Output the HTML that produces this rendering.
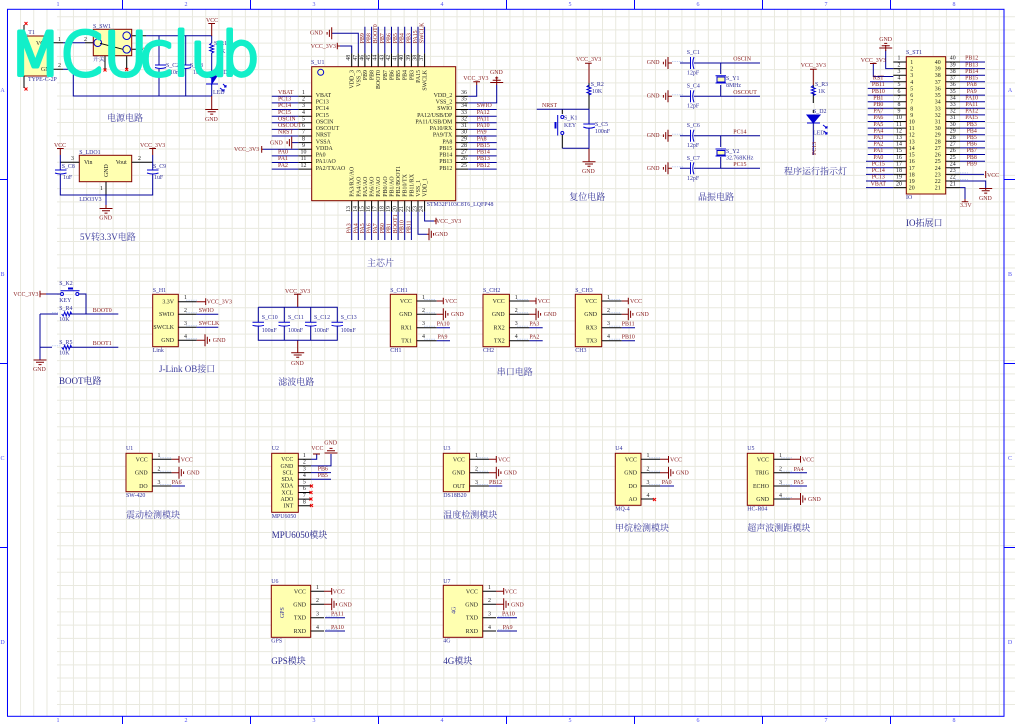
<!DOCTYPE html>
<html><head><meta charset="utf-8"><style>
html,body{margin:0;padding:0;background:#fff;width:1015px;height:724px;overflow:hidden}
svg{display:block;filter:blur(.3px)}
.w{stroke:#00009a;fill:none;stroke-width:1}
.p{stroke:#000;fill:none;stroke-width:1}
.m{stroke:#800000;fill:none;stroke-width:1}
.c{stroke:#0000d0;fill:none;stroke-width:1}
.bx{stroke:#800000;fill:#ffffb0;stroke-width:1}
.x{stroke:#f00000;fill:none;stroke-width:1}
text{font-family:"Liberation Serif","Noto Serif CJK SC",serif;font-size:5.9px}
.nl text{fill:#8a2020}
.dl text{fill:#30309a}
.pn text{fill:#222}
.nm text{fill:#222}
.tt text{fill:#3c3c9c;font-size:9px;font-family:"Liberation Serif","Noto Serif CJK SC",serif}
.fr text{fill:#5050f0;font-size:6px}
.e text{text-anchor:end}
.mid text{text-anchor:middle}
</style></head><body>
<svg width="1015" height="724" viewBox="0 0 1015 724" xmlns="http://www.w3.org/2000/svg">
<defs>
<g id="gr" class="m"><path d="M0-6V6M2.3-3.6V3.6M4.6-1.3V1.3"/></g>
<g id="gl" class="m"><path d="M0-6V6M-2.3-3.6V3.6M-4.6-1.3V1.3"/></g>
<g id="gd" class="m"><path d="M-6.5 0H6.5M-4 2.3H4M-1.5 4.6H1.5"/></g>
<g id="gu" class="m"><path d="M-6.5 0H6.5M-4-2.3H4M-1.5-4.6H1.5"/></g>
<g id="res" class="c"><path d="M0-5L-2-3.5 2-2-2-.5 2 1-2 2.5 2 4 0 5"/></g>
<g id="rh" class="c"><path d="M-5 0L-3.5 2-2-2-.5 2 1-2 2.5 2 4-2 5 0"/></g>
<g id="xm" class="x"><path d="M-1.5-1.5L1.5 1.5M-1.5 1.5L1.5-1.5"/></g>
</defs>
<rect width="1015" height="724" fill="#fff"/>
<!-- grid -->
<line x1="6.8" y1="362.5" x2="1004" y2="362.5" stroke="#e9e9df" stroke-width="707" stroke-dasharray="1 12.227"/>
<line x1="555.5" y1="16.2" x2="555.5" y2="716" stroke="#e9e9df" stroke-width="997" stroke-dasharray="1 12.227"/>
<!-- frame -->
<rect x="7.5" y="9.3" width="996.5" height="707" fill="none" stroke="#0000ff"/>
<path stroke="#0000ff" fill="none" d="M122.5 0V9M250.5 0V9M378.5 0V9M506.5 0V9M634.5 0V9M762.5 0V9M890.5 0V9M122.5 716V724M250.5 716V724M378.5 716V724M506.5 716V724M634.5 716V724M762.5 716V724M890.5 716V724M0 179.5H7.5M0 363.5H7.5M0 547.5H7.5M1004 179.5H1015M1004 363.5H1015M1004 547.5H1015"/>
<g class="fr mid">
<text x="58" y="6">1</text><text x="186" y="6">2</text><text x="314" y="6">3</text><text x="442" y="6">4</text><text x="570" y="6">5</text><text x="698" y="6">6</text><text x="826" y="6">7</text><text x="954" y="6">8</text>
<text x="58" y="722">1</text><text x="186" y="722">2</text><text x="314" y="722">3</text><text x="442" y="722">4</text><text x="570" y="722">5</text><text x="698" y="722">6</text><text x="826" y="722">7</text><text x="954" y="722">8</text>
<text x="2.5" y="92">A</text><text x="2.5" y="276">B</text><text x="2.5" y="460">C</text><text x="2.5" y="644">D</text>
<text x="1010" y="92">A</text><text x="1010" y="276">B</text><text x="1010" y="460">C</text><text x="1010" y="644">D</text>
</g>

<!-- pale artefacts next to pin/wire joins -->
<path stroke="#c4d2f4" fill="none" stroke-dasharray="1.4 1" d="M160 457.8H171M160 471.2H171M160 484.5H171M477 457.8H488M477 471.2H488M477 484.5H488M649 457.8H660M649 471.2H660M649 484.5H660M781 457.8H792M781 471.2H792M781 484.5H792M781 497.5H792M326 616.2H337M326 629.5H337M498 616.2H509M498 629.5H509M424 299.5H436M424 312.8H436M424 326.2H436M424 339.2H436M517 299.5H529M517 312.8H529M517 326.2H529M517 339.2H529M609 299.5H621M609 312.8H621M609 326.2H621M609 339.2H621M186 300.2H197M186 312.8H197M186 325.8H197M186 338.8H197M52 312.5H58M52 345.8H60M672 61.5H684M672 94.8H684M672 134.2H684M672 166.8H684M955 172.9H968M955 179.5H968"/>

<!-- POWER -->
<rect class="bx" x="20" y="36" width="32.7" height="40"/>
<path class="p" d="M24 36V25M24 76V88M52.7 42.7H63M52.7 69.3H63M85 42.7H93.3M131.7 35.7H146M131.7 49.3H143M105 55.7V70M126.7 55.7V70"/>
<use href="#xm" x="26" y="23.5"/><use href="#xm" x="26" y="89"/><use href="#xm" x="145" y="49.3"/><use href="#xm" x="105" y="70"/><use href="#xm" x="126.7" y="69.5"/>
<rect class="bx" x="93.3" y="29.3" width="38.4" height="26.4"/>
<g class="c"><circle cx="126.7" cy="35.7" r="3.8"/><circle cx="126.7" cy="49.3" r="3.8"/><circle cx="97.7" cy="42.7" r="3.8"/></g>
<path class="p" d="M100 43.3L123 49.3"/>
<path class="w" d="M63 42.7H85M63 69.3H73.3V96H211.7M146 35.7H211.7M159 35.7V65M159 69V96M185.7 35.7V65M185.7 69V96M211.7 35.7V43M211.7 53V76M211.7 84V96"/>
<path class="c" d="M155 65H166M155 67.5Q160.5 69.5 166 67.5M181 65H191M181 67.5Q186 69.5 191 67.5M206 84H218"/>
<path d="M211.7 78L206.5 76H217L211.7 84Z" fill="#0000d0" stroke="#0000d0"/>
<path class="c" d="M223 84L226 87M220 88L224 91M226 85V87H224M224 89V91H222"/>
<use href="#res" x="211.7" y="48"/>
<path class="m" d="M208.3 23.5H215M211.7 23.5V36M211.7 96V109.3"/><use href="#gd" x="211.7" y="109.5"/>
<g class="nl"><text x="206" y="22">VCC</text><text x="205" y="121">GND</text></g>
<g class="dl"><text x="22" y="34">S_T1</text><text x="28" y="81">TYPE-C-2P</text><text x="93" y="28">S_SW1</text><text x="93" y="61">开关</text><text x="166" y="67">S_C2</text><text x="170" y="74">10nF</text><text x="190" y="67">S_C3</text><text x="193" y="74">1uF</text><text x="214" y="45">S_R1</text><text x="218" y="53">1K</text><text x="217" y="74">S_D1</text><text x="213" y="94">LED</text></g>
<g class="pn"><text x="36" y="45">VCC</text><text x="41" y="71">GND</text></g>
<g class="nm"><text x="58" y="41">1</text><text x="58" y="67">2</text><text x="84" y="41">2</text><text x="138" y="34">1</text><text x="139" y="47">3</text></g>
<g class="tt"><text x="107" y="121">电源电路</text></g>

<!-- MCU -->
<rect class="bx" x="311.7" y="66.7" width="144" height="134"/>
<circle cx="320.7" cy="72.3" r="3" fill="none" stroke="#0000d0"/>
<path class="p" d="M298.3 96.3H311.7M298.3 102.9H311.7M298.3 109.5H311.7M298.3 116.2H311.7M298.3 122.8H311.7M298.3 129.4H311.7M298.3 136H311.7M298.3 142.6H311.7M298.3 149.3H311.7M298.3 155.9H311.7M298.3 162.5H311.7M298.3 169.1H311.7M455.7 96.3H468.3M455.7 102.9H468.3M455.7 109.5H468.3M455.7 116.2H468.3M455.7 122.8H468.3M455.7 129.4H468.3M455.7 136H468.3M455.7 142.6H468.3M455.7 149.3H468.3M455.7 155.9H468.3M455.7 162.5H468.3M455.7 169.1H468.3
M351.7 66.7V53.3M358.3 66.7V53.3M364.9 66.7V53.3M371.6 66.7V53.3M378.2 66.7V53.3M384.8 66.7V53.3M391.5 66.7V53.3M398.1 66.7V53.3M404.7 66.7V53.3M411.4 66.7V53.3M418 66.7V53.3M424.6 66.7V53.3
M351.7 200.7V211.7M358.3 200.7V211.7M364.9 200.7V211.7M371.6 200.7V211.7M378.2 200.7V211.7M384.8 200.7V211.7M391.5 200.7V211.7M398.1 200.7V211.7M404.7 200.7V211.7M411.4 200.7V211.7M418 200.7V211.7M424.6 200.7V211.7"/>
<path class="w" d="M271.7 96.3H298.3M271.7 102.9H298.3M271.7 109.5H298.3M271.7 116.2H298.3M271.7 122.8H298.3M271.7 129.4H298.3M271.7 136H298.3M291.7 142.6H298.3M263 149.3H298.3M271.7 155.9H298.3M271.7 162.5H298.3M271.7 169.1H298.3
M468.3 109.5H496.7M468.3 116.2H496.7M468.3 122.8H496.7M468.3 129.4H496.7M468.3 136H496.7M468.3 142.6H496.7M468.3 149.3H496.7M468.3 155.9H496.7M468.3 162.5H496.7M468.3 169.1H496.7M468.3 96.3H476.7V85M468.3 102.9H496.7V85
M351.7 53.3V46H340M358.3 53.3V33.3H332M364.9 53.3V26.7M371.6 53.3V26.7M378.2 53.3V26.7M384.8 53.3V26.7M391.5 53.3V26.7M398.1 53.3V26.7M404.7 53.3V26.7M411.4 53.3V26.7M418 53.3V26.7M424.6 53.3V26.7
M351.7 211.7V240M358.3 211.7V240M364.9 211.7V240M371.6 211.7V240M378.2 211.7V240M384.8 211.7V240M391.5 211.7V240M398.1 211.7V240M404.7 211.7V240M411.4 211.7V240M418 211.7V234.3H427M424.6 211.7V221H434"/>
<path class="m" d="M337.3 42.7V49.3M340 46H337.3M436 217.7V224.3M434 221H436M261.7 146V152.7M261.7 149.3H263M473.3 81.7H480M476.7 81.7V85M496.7 85V76.5M427 234.3H429"/>
<use href="#gl" x="331.7" y="33.3"/><use href="#gl" x="291.7" y="142.6"/><use href="#gu" x="496.7" y="82.5"/><use href="#gr" x="429" y="234.3"/>
<g class="nl">
<text x="310" y="34.5">GND</text><text x="310.7" y="48">VCC_3V3</text><text x="463.3" y="80">VCC_3V3</text><text x="490" y="74">GND</text><text x="436" y="223">VCC_3V3</text><text x="435" y="236">GND</text>
<text x="278" y="94">VBAT</text><text x="278" y="100.6">PC13</text><text x="278" y="107.2">PC14</text><text x="278" y="113.9">PC15</text><text x="278" y="120.5">OSCIN</text><text x="278" y="127.1">OSCOUT</text><text x="278" y="133.7">NRST</text><text x="270" y="144.5">GND</text><text x="234" y="151">VCC_3V3</text><text x="278" y="153.6">PA0</text><text x="278" y="160.2">PA1</text><text x="278" y="166.8">PA2</text>
<text x="476.7" y="107.2">SWIO</text><text x="476.7" y="113.9">PA12</text><text x="476.7" y="120.5">PA11</text><text x="476.7" y="127.1">PA10</text><text x="476.7" y="133.7">PA9</text><text x="476.7" y="140.3">PA8</text><text x="476.7" y="147">PB15</text><text x="476.7" y="153.6">PB14</text><text x="476.7" y="160.2">PB13</text><text x="476.7" y="166.8">PB12</text>
</g>
<g class="nm" text-anchor="middle">
<text x="303.5" y="94">1</text><text x="303.5" y="100.6">2</text><text x="303.5" y="107.2">3</text><text x="303.5" y="113.9">4</text><text x="303.5" y="120.5">5</text><text x="303.5" y="127.1">6</text><text x="303.5" y="133.7">7</text><text x="303.5" y="140.3">8</text><text x="303.5" y="147">9</text><text x="303.5" y="153.6">10</text><text x="303.5" y="160.2">11</text><text x="303.5" y="166.8">12</text>
<text x="464" y="94">36</text><text x="464" y="100.6">35</text><text x="464" y="107.2">34</text><text x="464" y="113.9">33</text><text x="464" y="120.5">32</text><text x="464" y="127.1">31</text><text x="464" y="133.7">30</text><text x="464" y="140.3">29</text><text x="464" y="147">28</text><text x="464" y="153.6">27</text><text x="464" y="160.2">26</text><text x="464" y="166.8">25</text>
</g>
<g class="pn">
<text x="315.7" y="97">VBAT</text><text x="315.7" y="103.6">PC13</text><text x="315.7" y="110.2">PC14</text><text x="315.7" y="116.9">PC15</text><text x="315.7" y="123.5">OSCIN</text><text x="315.7" y="130.1">OSCOUT</text><text x="315.7" y="136.7">NRST</text><text x="315.7" y="143.3">VSSA</text><text x="315.7" y="150">VDDA</text><text x="315.7" y="156.6">PA0</text><text x="315.7" y="163.2">PA1/AO</text><text x="315.7" y="169.8">PA2/TX/AO</text>
</g>
<g class="pn e">
<text x="452.3" y="97">VDD_2</text><text x="452.3" y="103.6">VSS_2</text><text x="452.3" y="110.2">SWIO</text><text x="452.3" y="116.9">PA12/USB/DP</text><text x="452.3" y="123.5">PA11/USB/DM</text><text x="452.3" y="130.1">PA10/RX</text><text x="452.3" y="136.7">PA9/TX</text><text x="452.3" y="143.3">PA8</text><text x="452.3" y="150">PB15</text><text x="452.3" y="156.6">PB14</text><text x="452.3" y="163.2">PB13</text><text x="452.3" y="169.8">PB12</text>
</g>
<g transform="rotate(-90)">
<g class="nl">
<text x="-43.3" y="363.9">PB9</text><text x="-43.3" y="370.6">PB8</text><text x="-43.3" y="377.2">BOOT0</text><text x="-43.3" y="383.8">PB7</text><text x="-43.3" y="390.5">PB6</text><text x="-43.3" y="397.1">PB5</text><text x="-43.3" y="403.7">PB4</text><text x="-43.3" y="410.4">PB3</text><text x="-43.3" y="417">PA15</text><text x="-43.3" y="423.6">SWCLK</text>
<text x="-233.3" y="350.7">PA3</text><text x="-233.3" y="357.3">PA4</text><text x="-233.3" y="363.9">PA5</text><text x="-233.3" y="370.6">PA6</text><text x="-233.3" y="377.2">PA7</text><text x="-233.3" y="383.8">PB0</text><text x="-233.3" y="390.5">PB1</text><text x="-233.3" y="397.1">BOOT1</text><text x="-233.3" y="403.7">PB10</text><text x="-233.3" y="410.4">PB11</text>
</g>
<g class="nm mid">
<text x="-57.7" y="350.2">48</text><text x="-57.7" y="356.8">47</text><text x="-57.7" y="363.4">46</text><text x="-57.7" y="370.1">45</text><text x="-57.7" y="376.7">44</text><text x="-57.7" y="383.3">43</text><text x="-57.7" y="390">42</text><text x="-57.7" y="396.6">41</text><text x="-57.7" y="403.2">40</text><text x="-57.7" y="409.9">39</text><text x="-57.7" y="416.5">38</text><text x="-57.7" y="423.1">37</text>
<text x="-209" y="350.2">13</text><text x="-209" y="356.8">14</text><text x="-209" y="363.4">15</text><text x="-209" y="370.1">16</text><text x="-209" y="376.7">17</text><text x="-209" y="383.3">18</text><text x="-209" y="390">19</text><text x="-209" y="396.6">20</text><text x="-209" y="403.2">21</text><text x="-209" y="409.9">22</text><text x="-209" y="416.5">23</text><text x="-209" y="423.1">24</text>
</g>
<g class="pn e">
<text x="-70" y="353.7">VDD_3</text><text x="-70" y="360.3">VSS_3</text><text x="-70" y="366.9">PB9</text><text x="-70" y="373.6">PB8</text><text x="-70" y="380.2">BOOT0</text><text x="-70" y="386.8">PB7</text><text x="-70" y="393.5">PB6</text><text x="-70" y="400.1">PB5</text><text x="-70" y="406.7">PB4</text><text x="-70" y="413.4">PB3</text><text x="-70" y="420">PA15</text><text x="-70" y="426.6">SWCLK</text>
</g>
<g class="pn">
<text x="-196.7" y="353.7">PA3/RX/AO</text><text x="-196.7" y="360.3">PA4/AO</text><text x="-196.7" y="366.9">PA5/AO</text><text x="-196.7" y="373.6">PA6/AO</text><text x="-196.7" y="380.2">PA7/AO</text><text x="-196.7" y="386.8">PB0/AO</text><text x="-196.7" y="393.5">PB1/AO</text><text x="-196.7" y="400.1">PB2/BOOT1</text><text x="-196.7" y="406.7">PB10/TX</text><text x="-196.7" y="413.4">PB11/RX</text><text x="-196.7" y="420">VSS_1</text><text x="-196.7" y="426.6">VDD_1</text>
</g>
</g>
<g class="dl"><text x="311" y="64">S_U1</text><text x="426.7" y="206">STM32F103C8T6_LQFP48</text></g>
<g class="tt"><text x="367" y="266">主芯片</text></g>

<!-- RESET -->
<path class="m" d="M585 63.3H591.7M589 63.3V83M589 148.3V161.7"/><use href="#gd" x="589" y="161.7"/>
<path class="p" d="M589 83V87M589 93V109.3M562.3 109.3V114M562.3 135V148.3"/>
<path class="w" d="M536.7 109.3H589V124M589 127.5V148.3H562.3"/>
<use href="#res" x="589" y="90"/>
<path class="c" d="M583.3 124H595M583.3 127Q589 129.5 595 127M557.7 115V135.5"/>
<path d="M555.5 122V128.5" stroke="#0000d0" stroke-width="2" fill="none"/>
<circle cx="562.3" cy="117" r="1.5" fill="#fff" stroke="#0000d0"/><circle cx="562.3" cy="133" r="1.5" fill="#fff" stroke="#0000d0"/>
<g class="nl"><text x="576" y="61">VCC_3V3</text><text x="582" y="173">GND</text><text x="542" y="107">NRST</text></g>
<g class="dl"><text x="590.7" y="86">S_R2</text><text x="592" y="93">10K</text><text x="595" y="126">S_C5</text><text x="595" y="133">100nF</text><text x="564" y="119.5">S_K1</text><text x="564" y="127">KEY</text></g>
<g class="tt"><text x="569.3" y="200">复位电路</text></g>

<!-- CRYSTAL -->
<use href="#gl" x="668" y="63"/><use href="#gl" x="668" y="96.3"/><use href="#gl" x="668" y="135.7"/><use href="#gl" x="668" y="168.3"/>
<path class="m" d="M668 63H672M668 96.3H672M668 135.7H672M668 168.3H672"/>
<path class="w" d="M680 63H690.5M694 63H760M680 96.3H690.5M694 96.3H760M680 135.7H690.5M694 135.7H760M680 168.3H690.5M694 168.3H760M720.7 63V74M720.7 85V96.3M720.7 135.7V147M720.7 157V168.3"/>
<path class="c" d="M690.5 57V69M694 57Q691.5 63 694 69M690.5 90.3V102.3M694 90.3Q691.5 96.3 694 102.3M690.5 129.7V141.7M694 129.7Q691.5 135.7 694 141.7M690.5 162.3V174.3M694 162.3Q691.5 168.3 694 174.3M715.5 75.7H726M715.5 83H726M715.5 149H726M715.5 156H726"/>
<rect x="717" y="77" width="8" height="5" fill="#ffffb0" stroke="#0000d0"/><rect x="717" y="150.5" width="8" height="4.5" fill="#ffffb0" stroke="#0000d0"/>
<g class="nl"><text x="646.7" y="64">GND</text><text x="646.7" y="97.5">GND</text><text x="646.7" y="137">GND</text><text x="646.7" y="170">GND</text><text x="733.3" y="60.5">OSCIN</text><text x="733.3" y="94">OSCOUT</text><text x="733.3" y="133.5">PC14</text><text x="733.3" y="166">PC15</text></g>
<g class="dl"><text x="686.7" y="54">S_C1</text><text x="687" y="74.5">12pF</text><text x="686.7" y="87.5">S_C4</text><text x="687" y="107.5">12pF</text><text x="686.7" y="127">S_C6</text><text x="687" y="147">12pF</text><text x="686.7" y="160">S_C7</text><text x="687" y="180">12pF</text><text x="726" y="80">S_Y1</text><text x="726" y="87">8MHz</text><text x="726" y="153">S_Y2</text><text x="726" y="159.5">32.768KHz</text></g>
<g class="tt"><text x="698" y="200">晶振电路</text></g>

<!-- LED -->
<path class="m" d="M810 69.3H816.7M813.3 69.3V85"/>
<path class="p" d="M813.3 85V88M813.3 93V103M813.3 110V113"/>
<use href="#res" x="813.3" y="90.5"/>
<path d="M813.3 123L807 115H820Z" fill="#0000d0" stroke="#0000d0"/>
<path class="c" d="M807 123H820M823 125L827 128M824 131L827 134M827 126V128H825M827 132V134H825"/>
<path class="w" d="M813.3 123V155"/>
<g class="nl"><text x="800.7" y="67">VCC_3V3</text><text x="816" y="155" transform="rotate(-90 816 155)">PC13</text></g>
<g class="dl"><text x="815" y="86">S_R3</text><text x="818" y="93">1K</text><text x="813" y="113">S_D2</text><text x="813" y="134.5">LED</text></g>
<g class="tt"><text x="784" y="174.5">程序运行指示灯</text></g>

<!-- IO -->
<rect class="bx" x="906.3" y="56.7" width="39.4" height="137.3"/>
<path class="p" d="M893.3 62H906.3M893.3 68.6H906.3M893.3 75.2H906.3M893.3 81.8H906.3M893.3 88.4H906.3M893.3 95.1H906.3M893.3 101.7H906.3M893.3 108.3H906.3M893.3 114.9H906.3M893.3 121.5H906.3M893.3 128.1H906.3M893.3 134.7H906.3M893.3 141.3H906.3M893.3 147.9H906.3M893.3 154.5H906.3M893.3 161.2H906.3M893.3 167.8H906.3M893.3 174.4H906.3M893.3 181H906.3M893.3 187.6H906.3
M945.7 62H960M945.7 68.6H960M945.7 75.2H960M945.7 81.8H960M945.7 88.4H960M945.7 95.1H960M945.7 101.7H960M945.7 108.3H960M945.7 114.9H960M945.7 121.5H960M945.7 128.1H960M945.7 134.7H960M945.7 141.3H960M945.7 147.9H960M945.7 154.5H960M945.7 161.2H960M945.7 167.8H960M945.7 174.4H960M945.7 181H960M945.7 187.6H960"/>
<path class="w" d="M885.7 50V68.6H893.3M873.3 63.5V76.5H893.3M870 81.8H893.3M867.7 88.4H893.3M867.7 95.1H893.3M867.7 101.7H893.3M867.7 108.3H893.3M867.7 114.9H893.3M867.7 121.5H893.3M867.7 128.1H893.3M867.7 134.7H893.3M867.7 141.3H893.3M867.7 147.9H893.3M867.7 154.5H893.3M866 161.2H893.3M866 167.8H893.3M866 174.4H893.3M866 181H893.3M866 187.6H893.3
M960 62H985M960 68.6H985M960 75.2H985M960 81.8H985M960 88.4H985M960 95.1H985M960 101.7H985M960 108.3H985M960 114.9H985M960 121.5H985M960 128.1H985M960 134.7H985M960 141.3H985M960 147.9H985M960 154.5H985M960 161.2H985M960 174.4H984M960 181H985.7V188M960 187.6H965V200"/>
<path class="m" d="M885.7 51V45M870 63.5H876.6M985.7 171V178M985.7 188V190M961.7 201.7H968.3M965 199V201.7"/><use href="#gu" x="885.7" y="48"/><use href="#gd" x="985.7" y="188.5"/>
<g class="nl">
<text x="879.3" y="41">GND</text><text x="860.7" y="62">VCC_3V3</text><text x="987" y="177">VCC</text><text x="979" y="200">GND</text><text x="960" y="207">3.3V</text>
</g>
<g class="nl mid">
<text x="878.3" y="79.5">RST</text><text x="878.3" y="86.1">PB11</text><text x="878.3" y="92.8">PB10</text><text x="878.3" y="99.4">PB1</text><text x="878.3" y="106">PB0</text><text x="878.3" y="112.6">PA7</text><text x="878.3" y="119.2">PA6</text><text x="878.3" y="125.8">PA5</text><text x="878.3" y="132.4">PA4</text><text x="878.3" y="139">PA3</text><text x="878.3" y="145.6">PA2</text><text x="878.3" y="152.2">PA1</text><text x="878.3" y="158.9">PA0</text><text x="878.3" y="165.5">PC15</text><text x="878.3" y="172.1">PC14</text><text x="878.3" y="178.7">PC13</text><text x="878.3" y="185.3">VBAT</text>
<text x="971.7" y="59.7">PB12</text><text x="971.7" y="66.3">PB13</text><text x="971.7" y="72.9">PB14</text><text x="971.7" y="79.5">PB15</text><text x="971.7" y="86.1">PA8</text><text x="971.7" y="92.8">PA9</text><text x="971.7" y="99.4">PA10</text><text x="971.7" y="106">PA11</text><text x="971.7" y="112.6">PA12</text><text x="971.7" y="119.2">PA15</text><text x="971.7" y="125.8">PB3</text><text x="971.7" y="132.4">PB4</text><text x="971.7" y="139">PB5</text><text x="971.7" y="145.6">PB6</text><text x="971.7" y="152.2">PB7</text><text x="971.7" y="158.9">PB8</text><text x="971.7" y="165.5">PB9</text>
</g>
<g class="nm mid">
<text x="899" y="59.7">1</text><text x="899" y="66.3">2</text><text x="899" y="72.9">3</text><text x="899" y="79.5">4</text><text x="899" y="86.1">5</text><text x="899" y="92.8">6</text><text x="899" y="99.4">7</text><text x="899" y="106">8</text><text x="899" y="112.6">9</text><text x="899" y="119.2">10</text><text x="899" y="125.8">11</text><text x="899" y="132.4">12</text><text x="899" y="139">13</text><text x="899" y="145.6">14</text><text x="899" y="152.2">15</text><text x="899" y="158.9">16</text><text x="899" y="165.5">17</text><text x="899" y="172.1">18</text><text x="899" y="178.7">19</text><text x="899" y="185.3">20</text>
<text x="952.7" y="59.7">40</text><text x="952.7" y="66.3">39</text><text x="952.7" y="72.9">38</text><text x="952.7" y="79.5">37</text><text x="952.7" y="86.1">36</text><text x="952.7" y="92.8">35</text><text x="952.7" y="99.4">34</text><text x="952.7" y="106">33</text><text x="952.7" y="112.6">32</text><text x="952.7" y="119.2">31</text><text x="952.7" y="125.8">30</text><text x="952.7" y="132.4">29</text><text x="952.7" y="139">28</text><text x="952.7" y="145.6">27</text><text x="952.7" y="152.2">26</text><text x="952.7" y="158.9">25</text><text x="952.7" y="165.5">24</text><text x="952.7" y="172.1">23</text><text x="952.7" y="178.7">22</text><text x="952.7" y="185.3">21</text>
</g>
<g class="pn mid">
<text x="911.7" y="64">1</text><text x="911.7" y="70.6">2</text><text x="911.7" y="77.2">3</text><text x="911.7" y="83.8">4</text><text x="911.7" y="90.4">5</text><text x="911.7" y="97.1">6</text><text x="911.7" y="103.7">7</text><text x="911.7" y="110.3">8</text><text x="911.7" y="116.9">9</text><text x="911.7" y="123.5">10</text><text x="911.7" y="130.1">11</text><text x="911.7" y="136.7">12</text><text x="911.7" y="143.3">13</text><text x="911.7" y="149.9">14</text><text x="911.7" y="156.5">15</text><text x="911.7" y="163.2">16</text><text x="911.7" y="169.8">17</text><text x="911.7" y="176.4">18</text><text x="911.7" y="183">19</text><text x="911.7" y="189.6">20</text>
<text x="937.7" y="64">40</text><text x="937.7" y="70.6">39</text><text x="937.7" y="77.2">38</text><text x="937.7" y="83.8">37</text><text x="937.7" y="90.4">36</text><text x="937.7" y="97.1">35</text><text x="937.7" y="103.7">34</text><text x="937.7" y="110.3">33</text><text x="937.7" y="116.9">32</text><text x="937.7" y="123.5">31</text><text x="937.7" y="130.1">30</text><text x="937.7" y="136.7">29</text><text x="937.7" y="143.3">28</text><text x="937.7" y="149.9">27</text><text x="937.7" y="156.5">26</text><text x="937.7" y="163.2">25</text><text x="937.7" y="169.8">24</text><text x="937.7" y="176.4">23</text><text x="937.7" y="183">22</text><text x="937.7" y="189.6">21</text>
</g>
<g class="dl"><text x="906" y="54">S_ST1</text><text x="906" y="199">IO</text></g>
<g class="tt"><text x="906" y="226" style="fill:#28288c">IO拓展口</text></g>

<!-- LDO -->
<rect class="bx" x="79.3" y="155.3" width="52.4" height="26.4"/>
<path class="p" d="M60.3 162.3H79.3M131.7 162.3H152.7M106 181.7V195"/>
<path class="w" d="M60.3 155V170M60.3 173.5V195H152.7V173.5M152.7 170V155M106 195V205"/>
<path class="c" d="M55 170H66.5M55 173Q60.3 175 66.5 173M147 170H158.5M147 173Q152.7 175 158.5 173"/>
<path class="m" d="M57 148.5H63.7M60.3 148.5V155M149.3 148.5H156M152.7 148.5V155M106 205V208.5"/><use href="#gd" x="106" y="208.5"/>
<g class="nl"><text x="54" y="147">VCC</text><text x="140" y="147">VCC_3V3</text><text x="99.3" y="219.5">GND</text></g>
<g class="dl"><text x="79.3" y="154">S_LDO1</text><text x="79.3" y="201">LDO3V3</text><text x="61.7" y="168">S_C8</text><text x="63" y="179">1uF</text><text x="153" y="168">S_C9</text><text x="154" y="179">1uF</text></g>
<g class="pn"><text x="84" y="164">Vin</text><text x="115.7" y="164">Vout</text><text x="108" y="177" transform="rotate(-90 108 177)">GND</text></g>
<g class="nm"><text x="71" y="160">3</text><text x="138" y="160">2</text><text x="100" y="190">1</text></g>
<g class="tt"><text x="80" y="240">5V转3.3V电路</text></g>

<!-- BOOT -->
<path class="m" d="M40 290.7V297.3M40 294H46"/>
<path class="w" d="M46 294H60M79 294H86V314M40 314V360M40 314H58M70 314H118.3M40 347.3H52M70 347.3H118.3"/>
<path class="c" d="M60.5 290.7H79.5"/>
<path d="M68 288.5H73" stroke="#0000d0" stroke-width="2"/>
<circle cx="62" cy="294" r="1.5" fill="#fff" stroke="#0000d0"/><circle cx="77.3" cy="294" r="1.5" fill="#fff" stroke="#0000d0"/>
<use href="#rh" x="66.7" y="314"/><use href="#rh" x="66.7" y="347.3"/>
<use href="#gd" x="40" y="360"/>
<g class="nl"><text x="13.3" y="296">VCC_3V3</text><text x="92.7" y="312">BOOT0</text><text x="92.7" y="345">BOOT1</text><text x="33" y="371">GND</text></g>
<g class="dl"><text x="59.3" y="285">S_K2</text><text x="59.3" y="302">KEY</text><text x="59.3" y="310">S_R4</text><text x="59.3" y="321">10K</text><text x="59.3" y="344">S_R5</text><text x="59.3" y="354.5">10K</text></g>
<g class="tt"><text x="59" y="384" style="fill:#28288c">BOOT电路</text></g>

<!-- JLINK -->
<rect class="bx" x="152.7" y="294.3" width="25.6" height="52.4"/>
<path class="p" d="M178.3 301.7H196.7M178.3 314.3H196.7M178.3 327.3H196.7M178.3 340.3H196.7"/>
<path class="w" d="M196.7 314.3H218.3M196.7 327.3H218.3"/>
<path class="m" d="M196.7 301.7H205.7M205.7 298.3V305M196.7 340.3H205"/><use href="#gr" x="205" y="340.3"/>
<g class="nl"><text x="206.7" y="303.5">VCC_3V3</text><text x="198.7" y="312">SWIO</text><text x="198.7" y="325">SWCLK</text><text x="212.7" y="342">GND</text></g>
<g class="dl"><text x="152.7" y="292">S_H1</text><text x="152.7" y="352">Link</text></g>
<g class="pn e"><text x="174" y="303.5">3.3V</text><text x="174" y="316.2">SWIO</text><text x="174" y="329">SWCLK</text><text x="174" y="342">GND</text></g>
<g class="nm"><text x="184" y="299">1</text><text x="184" y="312">2</text><text x="184" y="325">3</text><text x="184" y="338">4</text></g>
<g class="tt"><text x="159" y="372">J-Link OB接口</text></g>

<!-- FILTER -->
<path class="m" d="M294 294.3H301.3M297.7 294.3V307.3M297.7 340.3V352.7"/><use href="#gd" x="297.7" y="352.7"/>
<path class="w" d="M258.3 307.3H337.3V322.3M258.3 307.3V322.3M284.3 307.3V322.3M310.7 307.3V322.3M258.3 325.7V340.3H337.3V325.7M284.3 325.7V340.3M310.7 325.7V340.3"/>
<path class="c" d="M252.5 322.3H264M252.5 325.3Q258.3 327 264 325.3M278.5 322.3H290M278.5 325.3Q284.3 327 290 325.3M305 322.3H316.5M305 325.3Q310.7 327 316.5 325.3M331.5 322.3H343M331.5 325.3Q337.3 327 343 325.3"/>
<g class="nl"><text x="285" y="293">VCC_3V3</text><text x="291" y="365">GND</text></g>
<g class="dl"><text x="261.7" y="319">S_C10</text><text x="288" y="319">S_C11</text><text x="314" y="319">S_C12</text><text x="340.7" y="319">S_C13</text><text x="261.7" y="332">100nF</text><text x="288" y="332">100nF</text><text x="314" y="332">100nF</text><text x="340.7" y="332">100nF</text></g>
<g class="tt"><text x="278.3" y="385">滤波电路</text></g>

<!-- CH1 -->
<g id="ch1">
<rect class="bx" x="390.3" y="294.3" width="26.4" height="52.4"/>
<path class="p" d="M416.7 301H436.7M416.7 314.3H436.7M416.7 327.7H436.7M416.7 340.7H436.7"/>
<path class="w" d="M436.7 327.7H450M436.7 340.7H450"/>
<path class="m" d="M436.7 301H443.3M443.3 297.7V304.3M436.7 314.3H443.3"/><use href="#gr" x="443.3" y="314.3"/>
</g>
<g class="nl"><text x="445" y="303">VCC</text><text x="451" y="316.2">GND</text><text x="436.7" y="325.5">PA10</text><text x="437.5" y="338.5">PA9</text></g>
<g class="dl"><text x="390.3" y="292">S_CH1</text><text x="390.3" y="352">CH1</text></g>
<g class="pn e"><text x="412" y="303">VCC</text><text x="412" y="316.2">GND</text><text x="412" y="329.5">RX1</text><text x="412" y="342.5">TX1</text></g>
<g class="nm"><text x="422" y="299">1</text><text x="422" y="312">2</text><text x="422" y="325">3</text><text x="422" y="338">4</text></g>
<!-- CH2 -->
<use href="#ch1" x="92.7"/>
<g class="nl"><text x="537.7" y="303">VCC</text><text x="543.7" y="316.2">GND</text><text x="529.4" y="325.5">PA3</text><text x="529.4" y="338.5">PA2</text></g>
<g class="dl"><text x="483" y="292">S_CH2</text><text x="483" y="352">CH2</text></g>
<g class="pn e"><text x="504.7" y="303">VCC</text><text x="504.7" y="316.2">GND</text><text x="504.7" y="329.5">RX2</text><text x="504.7" y="342.5">TX2</text></g>
<g class="nm"><text x="514.7" y="299">1</text><text x="514.7" y="312">2</text><text x="514.7" y="325">3</text><text x="514.7" y="338">4</text></g>
<!-- CH3 -->
<use href="#ch1" x="185"/>
<g class="nl"><text x="630" y="303">VCC</text><text x="636" y="316.2">GND</text><text x="621.7" y="325.5">PB11</text><text x="621.7" y="338.5">PB10</text></g>
<g class="dl"><text x="575.3" y="292">S_CH3</text><text x="575.3" y="352">CH3</text></g>
<g class="pn e"><text x="597" y="303">VCC</text><text x="597" y="316.2">GND</text><text x="597" y="329.5">RX3</text><text x="597" y="342.5">TX3</text></g>
<g class="nm"><text x="607" y="299">1</text><text x="607" y="312">2</text><text x="607" y="325">3</text><text x="607" y="338">4</text></g>
<g class="tt"><text x="496.7" y="375">串口电路</text></g>

<!-- U1 -->
<g id="u1">
<rect class="bx" x="126" y="453.3" width="26.3" height="38.4"/>
<path class="p" d="M152.3 459.3H171.7M152.3 472.7H171.7M152.3 486H171.7"/>
<path class="w" d="M171.7 486H185"/>
<path class="m" d="M171.7 459.3H179M179 456V462.6M171.7 472.7H179"/><use href="#gr" x="179" y="472.7"/>
</g>
<g class="nl"><text x="180.7" y="461.3">VCC</text><text x="186.7" y="474.7">GND</text><text x="171.7" y="484">PA6</text></g>
<g class="dl"><text x="126" y="450">U1</text><text x="126" y="497">SW-420</text></g>
<g class="pn e"><text x="147.7" y="461.3">VCC</text><text x="147.7" y="474.7">GND</text><text x="147.7" y="488">DO</text></g>
<g class="nm"><text x="157.5" y="457">1</text><text x="157.5" y="470.5">2</text><text x="157.5" y="484">3</text></g>
<g class="tt"><text x="126" y="518">震动检测模块</text></g>

<!-- U2 -->
<rect class="bx" x="271.7" y="453.3" width="26.6" height="59"/>
<path class="p" d="M298.3 459.3H311M298.3 465.9H311M298.3 472.6H311M298.3 479.2H311M298.3 485.9H311M298.3 492.5H311M298.3 499.1H311M298.3 505.8H311"/>
<path class="w" d="M311 459.3H316.7V454M311 465.9H331V454M311 472.6H331M311 479.2H331"/>
<path class="m" d="M313 454H320"/><use href="#gu" x="331" y="453"/>
<use href="#xm" x="311.5" y="486"/><use href="#xm" x="311" y="492.5"/><use href="#xm" x="311" y="499"/><use href="#xm" x="311.5" y="505.5"/>
<g class="nl"><text x="311.3" y="450">VCC</text><text x="324.3" y="444.5">GND</text><text x="317.7" y="470.3">PB6</text><text x="317.7" y="477">PB5</text></g>
<g class="dl"><text x="271.7" y="450">U2</text><text x="271.7" y="518">MPU6050</text></g>
<g class="pn e"><text x="293.3" y="461.2">VCC</text><text x="293.3" y="467.8">GND</text><text x="293.3" y="474.5">SCL</text><text x="293.3" y="481.1">SDA</text><text x="293.3" y="487.7">XDA</text><text x="293.3" y="494.3">XCL</text><text x="293.3" y="501">ADO</text><text x="293.3" y="507.6">INT</text></g>
<g class="nm mid"><text x="304.3" y="457">1</text><text x="304.3" y="463.6">2</text><text x="304.3" y="470.3">3</text><text x="304.3" y="477">4</text><text x="304.3" y="483.6">5</text><text x="304.3" y="490.2">6</text><text x="304.3" y="496.8">7</text><text x="304.3" y="503.5">8</text></g>
<g class="tt"><text x="271.7" y="538" style="fill:#28288c">MPU6050模块</text></g>

<!-- U3 -->
<use href="#u1" x="317.3"/>
<g class="nl"><text x="498" y="461.3">VCC</text><text x="504" y="474.7">GND</text><text x="489" y="484">PB12</text></g>
<g class="dl"><text x="443.3" y="450">U3</text><text x="443.3" y="497">DS18B20</text></g>
<g class="pn e"><text x="465" y="461.3">VCC</text><text x="465" y="474.7">GND</text><text x="465" y="488">OUT</text></g>
<g class="nm"><text x="475" y="457">1</text><text x="475" y="470.5">2</text><text x="475" y="484">3</text></g>
<g class="tt"><text x="443.3" y="518">温度检测模块</text></g>

<!-- U4 -->
<rect class="bx" x="615.3" y="453.3" width="25.7" height="52"/>
<path class="p" d="M641 459.3H660M641 472.7H660M641 486H660M641 499H654"/>
<path class="w" d="M660 486H674"/>
<path class="m" d="M660 459.3H668.5M668.5 456V462.6M660 472.7H668.5"/><use href="#gr" x="668.5" y="472.7"/>
<use href="#xm" x="654.5" y="499.5"/>
<g class="nl"><text x="670" y="461.3">VCC</text><text x="676" y="474.7">GND</text><text x="661.7" y="484">PA0</text></g>
<g class="dl"><text x="615.3" y="450">U4</text><text x="615.3" y="510.5">MQ-4</text></g>
<g class="pn e"><text x="637" y="461.3">VCC</text><text x="637" y="474.7">GND</text><text x="637" y="488">DO</text><text x="637" y="501">AO</text></g>
<g class="nm"><text x="646.5" y="457">1</text><text x="646.5" y="470.5">2</text><text x="646.5" y="484">3</text><text x="646.5" y="497">4</text></g>
<g class="tt"><text x="615" y="531">甲烷检测模块</text></g>

<!-- U5 -->
<rect class="bx" x="747.3" y="453.3" width="26.4" height="52"/>
<path class="p" d="M773.7 459.3H790M773.7 472.7H790M773.7 486H790M773.7 499H790"/>
<path class="w" d="M790 472.7H807M790 486H807"/>
<path class="m" d="M790 459.3H800.5M800.5 456V462.6M790 499H800.5"/><use href="#gr" x="800.5" y="499"/>
<g class="nl"><text x="802" y="461.3">VCC</text><text x="808" y="501">GND</text><text x="793.7" y="471">PA4</text><text x="793.7" y="484">PA5</text></g>
<g class="dl"><text x="747.3" y="450">U5</text><text x="747.3" y="510.5">HC-R04</text></g>
<g class="pn e"><text x="769" y="461.3">VCC</text><text x="769" y="474.7">TRIG</text><text x="769" y="488">ECHO</text><text x="769" y="501">GND</text></g>
<g class="nm"><text x="779" y="457">1</text><text x="779" y="470.5">2</text><text x="779" y="484">3</text><text x="779" y="497">4</text></g>
<g class="tt"><text x="747.3" y="531">超声波测距模块</text></g>

<!-- U6 -->
<g id="u6">
<rect class="bx" x="271.3" y="585.3" width="39.4" height="52"/>
<path class="p" d="M310.7 591.3H324M310.7 604.3H324M310.7 617.7H324M310.7 631H324"/>
<path class="w" d="M325 617.7H345M325 631H345"/>
<path class="m" d="M324 591.3H331.7M331.7 588V594.6M324 604.3H331.7"/><use href="#gr" x="331.7" y="604.3"/>
</g>
<g class="nl"><text x="332.7" y="593.3">VCC</text><text x="339" y="606.3">GND</text><text x="331" y="615.5">PA11</text><text x="331" y="629">PA10</text></g>
<g class="dl"><text x="271.3" y="583">U6</text><text x="271.3" y="642.5">GPS</text><text x="284" y="618" transform="rotate(-90 284 618)">GPS</text></g>
<g class="pn e"><text x="306" y="593.3">VCC</text><text x="306" y="606.3">GND</text><text x="306" y="619.7">TXD</text><text x="306" y="633">RXD</text></g>
<g class="nm"><text x="316" y="589">1</text><text x="316" y="602">2</text><text x="316" y="615.5">3</text><text x="316" y="629">4</text></g>
<g class="tt"><text x="271.3" y="664" style="fill:#28288c">GPS模块</text></g>

<!-- U7 -->
<use href="#u6" x="172"/>
<g class="nl"><text x="504.7" y="593.3">VCC</text><text x="511" y="606.3">GND</text><text x="502" y="615.5">PA10</text><text x="502.7" y="629">PA9</text></g>
<g class="dl"><text x="443.3" y="583">U7</text><text x="443.3" y="642.5">4G</text><text x="455.5" y="614" transform="rotate(-90 455.5 614)">4G</text></g>
<g class="pn e"><text x="478" y="593.3">VCC</text><text x="478" y="606.3">GND</text><text x="478" y="619.7">TXD</text><text x="478" y="633">RXD</text></g>
<g class="nm"><text x="488" y="589">1</text><text x="488" y="602">2</text><text x="488" y="615.5">3</text><text x="488" y="629">4</text></g>
<g class="tt"><text x="443.3" y="664" style="fill:#28288c">4G模块</text></g>

<!-- watermark -->
<text x="9.5 60.5 103.5 140 173 190 221.5" y="75" style="font-family:'DejaVu Sans ExtraLight','DejaVu Sans',sans-serif;font-weight:200;font-size:60px;fill:#12efc9;stroke:#12efc9;stroke-width:4px;stroke-linejoin:round;stroke-linecap:round">MCUclub</text>
</svg>
</body></html>
